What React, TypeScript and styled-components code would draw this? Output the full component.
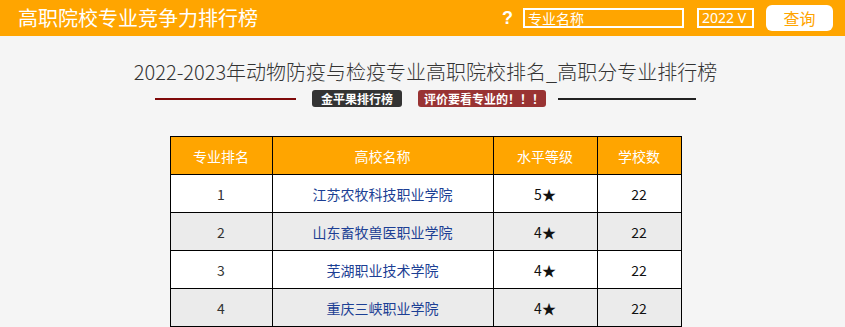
import React from "react";
import styled, { createGlobalStyle } from "styled-components";

const Global = createGlobalStyle`
  html, body { margin: 0; padding: 0; background: #f5f5f5; }
  body { font-family: "Noto Sans CJK SC", "Noto Sans", sans-serif; }
  * { box-sizing: border-box; }
`;

const ORANGE = "#ffa500";

const Header = styled.header`
  height: 36px;
  background: ${ORANGE};
  display: flex;
  align-items: center;
  justify-content: space-between;
  padding: 0 12px 0 18px;
`;

const Brand = styled.h1`
  margin: 0;
  font-size: 20px;
  font-weight: 400;
  color: #fff;
  line-height: 36px;
`;

const Controls = styled.div`
  display: flex;
  align-items: center;
`;

const Help = styled.span`
  color: #fff;
  font-size: 18px;
  font-family: "Liberation Sans", sans-serif;
  font-weight: 700;
  margin-right: 10px;
  line-height: 20px;
`;

const SearchBox = styled.div`
  width: 161px;
  height: 20px;
  border: 2px solid #fff;
  color: #fff;
  font-size: 14px;
  line-height: 16px;
  padding-left: 3px;
  margin-right: 13px;
`;

const YearSelect = styled.div`
  width: 57px;
  height: 20px;
  border: 2px solid #fff;
  color: #fff;
  font-size: 14px;
  line-height: 16px;
  padding-left: 3px;
  font-family: "Noto Sans", sans-serif;
  margin-right: 12px;
  white-space: nowrap;
`;

const QueryButton = styled.button`
  width: 67px;
  height: 26px;
  border: none;
  border-radius: 6px;
  background: #fff;
  color: ${ORANGE};
  font-size: 16px;
  font-family: "Noto Sans CJK SC", sans-serif;
  padding: 0;
  line-height: 26px;
`;

const Main = styled.main`
  padding-left: 6px;
  display: flex;
  flex-direction: column;
  align-items: center;
`;

const Title = styled.h2`
  margin: 22px 0 0;
  font-size: 20px;
  font-weight: 300;
  line-height: 28px;
  color: #333;
`;

const DividerRow = styled.div`
  margin-top: 4px;
  display: flex;
  align-items: center;
  height: 17px;
`;

const Rule = styled.div<{ $color: string; $w: number }>`
  width: ${(p) => p.$w}px;
  height: 2px;
  background: ${(p) => p.$color};
`;

const Badge = styled.span<{ $bg: string; $pad: string; $ml: number; $mr: number }>`
  display: inline-block;
  height: 17px;
  line-height: 17px;
  padding: ${(p) => p.$pad};
  border-radius: 3px;
  background: ${(p) => p.$bg};
  color: #fff;
  font-size: 12px;
  font-weight: 700;
  margin: 0 ${(p) => p.$mr}px 0 ${(p) => p.$ml}px;
  white-space: nowrap;
`;

const Table = styled.table`
  margin-top: 29px;
  border-collapse: collapse;
  width: 511px;
  font-size: 14px;
  table-layout: fixed;
`;

const Th = styled.th<{ $w: number }>`
  width: ${(p) => p.$w}px;
  height: 38px;
  background: ${ORANGE};
  color: #fff;
  font-weight: 400;
  border: 1px solid #000;
  padding: 0;
`;

const Row = styled.tr<{ $alt: boolean }>`
  background: ${(p) => (p.$alt ? "#ebebeb" : "#fff")};
`;

const Td = styled.td<{ $color?: string }>`
  height: 38px;
  border: 1px solid #000;
  text-align: center;
  padding: 0;
  color: ${(p) => p.$color ?? "#111"};
`;

const rows = [
  { rank: 1, name: "江苏农牧科技职业学院", level: "5★", count: 22 },
  { rank: 2, name: "山东畜牧兽医职业学院", level: "4★", count: 22 },
  { rank: 3, name: "芜湖职业技术学院", level: "4★", count: 22 },
  { rank: 4, name: "重庆三峡职业学院", level: "4★", count: 22 },
];

export default function App() {
  return (
    <>
      <Global />
      <Header>
        <Brand>高职院校专业竞争力排行榜</Brand>
        <Controls>
          <Help>?</Help>
          <SearchBox>专业名称</SearchBox>
          <YearSelect>2022 V</YearSelect>
          <QueryButton>查询</QueryButton>
        </Controls>
      </Header>
      <Main>
        <Title>2022-2023年动物防疫与检疫专业高职院校排名_高职分专业排行榜</Title>
        <DividerRow>
          <Rule $color="#7f0a0a" $w={141} />
          <Badge $bg="#333" $pad="0 9px" $ml={16} $mr={16}>金平果排行榜</Badge>
          <Badge $bg="#993333" $pad="0 2px 0 6px" $ml={0} $mr={12}>评价要看专业的！！！</Badge>
          <Rule $color="#222" $w={138} />
        </DividerRow>
        <Table>
          <thead>
            <tr>
              <Th $w={102}>专业排名</Th>
              <Th $w={221}>高校名称</Th>
              <Th $w={104}>水平等级</Th>
              <Th $w={84}>学校数</Th>
            </tr>
          </thead>
          <tbody>
            {rows.map((r, i) => (
              <Row key={r.rank} $alt={i % 2 === 1}>
                <Td $color="#333">{r.rank}</Td>
                <Td $color="#1c3f94">{r.name}</Td>
                <Td>{r.level}</Td>
                <Td>{r.count}</Td>
              </Row>
            ))}
          </tbody>
        </Table>
      </Main>
    </>
  );
}
